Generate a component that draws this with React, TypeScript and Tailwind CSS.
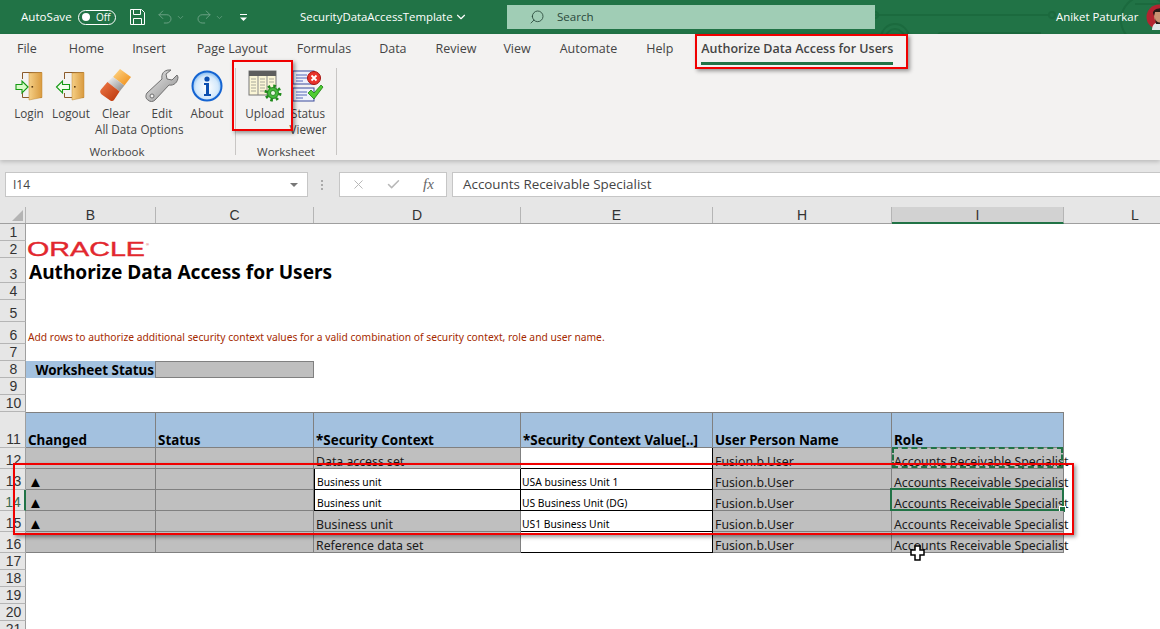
import { ChevronDown, Search, Undo2, Redo2, X, Check } from "lucide-react";

const ui = "font-['Open_Sans','Noto_Sans',sans-serif]";
const cell = "font-['Noto_Sans','Open_Sans',sans-serif] text-[12.3px] text-[#1a1a1a]";

const DoorIcon = ({ flip }: { flip?: boolean }) => (
  <svg width="32" height="32" viewBox="0 0 32 32">
    <defs>
      <linearGradient id={flip ? "doorB" : "doorA"} x1="0" x2="1" y1="0" y2="0">
        <stop offset="0" stopColor="#f5cf86" />
        <stop offset="1" stopColor="#d99a3e" />
      </linearGradient>
    </defs>
    <path d="M9.5 9V2.5h19v25h-19V23" fill="none" stroke="#8a5a2a" strokeWidth="1" />
    {flip ? (
      <>
        <path d="M17 3l12-.5v25l-12 2.5z" fill="url(#doorB)" stroke="#c08a36" strokeWidth=".5" />
        <rect x="19" y="16" width="1.6" height="1.6" fill="#5b3a12" />
        <path d="M1.5 17l6-6v3.5h7v5h-7V23z" fill="#f2fdec" stroke="#159a15" strokeWidth="1.1" />
      </>
    ) : (
      <>
        <path d="M16 3l13-.5v25l-13 2.5z" fill="url(#doorA)" stroke="#c08a36" strokeWidth=".5" />
        <rect x="18.5" y="16" width="1.6" height="1.6" fill="#5b3a12" />
        <path d="M15 17l-6-6v3.5H3v5h6V23z" fill="#d9fbc8" stroke="#159a15" strokeWidth="1.1" />
      </>
    )}
  </svg>
);

const EraserIcon = () => (
  <svg width="34" height="34" viewBox="0 0 34 34">
    <defs>
      <linearGradient id="er1" x1="0" x2="1" y1="0" y2="1">
        <stop offset="0" stopColor="#ffd98c" />
        <stop offset="1" stopColor="#ee8a12" />
      </linearGradient>
      <linearGradient id="er2" x1="0" x2="1" y1="0" y2="1">
        <stop offset="0" stopColor="#f8f8f8" />
        <stop offset="1" stopColor="#848484" />
      </linearGradient>
      <linearGradient id="er3" x1="0" x2="1" y1="0" y2="1">
        <stop offset="0" stopColor="#f07a48" />
        <stop offset="1" stopColor="#b8340a" />
      </linearGradient>
    </defs>
    <path d="M21 0l11 8-6.600 8.400L14 8z" fill="url(#er1)" />
    <path d="M14 8l11.400 8.400-4.800 6L8.400 13z" fill="url(#er2)" />
    <path d="M8.400 13l12.200 9.400L15 31c-1 1.300-2.500 1.200-3.800.4l-8.500-6C1 24 .6 22 2 20.500z" fill="url(#er3)" />
  </svg>
);

const WrenchIcon = () => (
  <svg width="34" height="34" viewBox="0 0 34 34">
    <defs>
      <linearGradient id="wr" x1="0" x2="1" y1="0" y2="1">
        <stop offset="0" stopColor="#ececec" />
        <stop offset="1" stopColor="#8c8c8c" />
      </linearGradient>
    </defs>
    <path
      d="M24 1c-5 0-8 4-7 9L2 24c-2 3-1 6 1 7 2 2 5 2 7 0l14-15c5 1 9-3 9-8l-1-2-5 5-5-1-1-5 5-4z"
      fill="url(#wr)"
      stroke="#6f6f6f"
      strokeWidth="1"
    />
    <circle cx="7" cy="27" r="2" fill="#f3f2f1" stroke="#6f6f6f" />
  </svg>
);

const InfoIcon = () => (
  <svg width="32" height="32" viewBox="0 0 32 32">
    <defs>
      <radialGradient id="inf" cx=".5" cy=".55" r=".55">
        <stop offset="0" stopColor="#ffffff" />
        <stop offset=".7" stopColor="#d3e8fb" />
        <stop offset="1" stopColor="#78b4ee" />
      </radialGradient>
    </defs>
    <circle cx="16" cy="16" r="14.5" fill="url(#inf)" stroke="#1464d2" strokeWidth="2" />
    <circle cx="16" cy="9" r="2.6" fill="#0c4fb0" />
    <path d="M13 13h5v11h2v2h-7v-2h2v-9h-2z" fill="#0c4fb0" />
  </svg>
);

const Gear = ({ x, y }: { x: number; y: number }) => (
  <g transform={`translate(${x} ${y})`}>
    <circle r="7" fill="none" stroke="#1e8a1a" strokeWidth="3" strokeDasharray="2.600 2.900" />
    <circle r="5.500" fill="#46bb3e" stroke="#12730f" strokeWidth=".8" />
    <circle r="2.500" fill="#e8f7e2" stroke="#12730f" strokeWidth=".8" />
  </g>
);

const UploadIcon = () => (
  <svg width="34" height="32" viewBox="0 0 34 32">
    <rect x="1" y="1" width="27" height="24" fill="#fbf6d6" stroke="#777" />
    <rect x="1" y="1" width="27" height="5" fill="#5e5e5e" />
    <path d="M10 6v19M19 6v19" stroke="#8b8b8b" />
    <path d="M3 9h5M3 12h5M3 15h5M3 18h5M3 21h5M12 9h5M12 12h5M12 15h5M12 18h5M12 21h5M21 9h5M21 12h5" stroke="#a8a89a" />
    <Gear x={25} y={23} />
  </svg>
);

const StatusIcon = () => (
  <svg width="32" height="34" viewBox="0 0 32 34">
    <rect x="1" y="2" width="21" height="13" fill="#eef1fb" stroke="#3b4a9c" />
    <rect x="1" y="19" width="21" height="13" fill="#eef1fb" stroke="#3b4a9c" />
    <path d="M4 6h11M4 9h11M4 12h7M4 23h11M4 26h11M4 29h7" stroke="#5566b8" />
    <circle cx="22" cy="9" r="6.500" fill="#e8322c" stroke="#a51410" />
    <path d="M19.500 6.500l5 5m0-5l-5 5" stroke="#fff" strokeWidth="1.800" />
    <path d="M16 24l3-3 3 3 7-8 2 2-9 12z" fill="#4fcc32" stroke="#1c7d12" strokeWidth=".8" />
  </svg>
);

const RibbonButton = ({ icon, lines, className }: { icon: React.ReactNode; lines: string[]; className: string }) => (
  <div className={`flex flex-col items-center shrink-0 ${className}`}>
    <div className="h-[35px] flex items-center justify-center">{icon}</div>
    <div className="mt-[2px] text-center text-[11.7px] leading-[16px] text-[#444] whitespace-nowrap">
      {lines.map((l) => (
        <div key={l}>{l}</div>
      ))}
    </div>
  </div>
);

const tabs = [
  { label: "File", cls: "ml-[17px]" },
  { label: "Home", cls: "ml-[32px]" },
  { label: "Insert", cls: "ml-[28px]" },
  { label: "Page Layout", cls: "ml-[31px]" },
  { label: "Formulas", cls: "ml-[29px]" },
  { label: "Data", cls: "ml-[28px]" },
  { label: "Review", cls: "ml-[29px]" },
  { label: "View", cls: "ml-[27px]" },
  { label: "Automate", cls: "ml-[29px]" },
  { label: "Help", cls: "ml-[29px]" },
];

const TitleBar = () => (
  <div className={`${ui} relative h-[34px] bg-[#217346] flex items-center text-[11.6px] text-white overflow-hidden`}>
    <svg className="absolute left-[800px] top-0" width="360" height="34" viewBox="0 0 360 34" fill="none" stroke="#1b6a3e" strokeWidth="2">
      <path d="M75 15h174" />
      <circle cx="252" cy="15" r="3" />
      <circle cx="75" cy="15" r="3" />
      <circle cx="95" cy="38" r="9" />
      <circle cx="95" cy="38" r="14" />
      <circle cx="141" cy="36" r="3" />
      <path d="M141 33h100" />
      <circle cx="345" cy="20" r="24" />
      <path d="M335 4h25" />
    </svg>
    <span className="ml-[21px] w-[50px] shrink-0 whitespace-nowrap">AutoSave</span>
    <div className="ml-[7px] w-[38px] h-[15px] shrink-0 rounded-full border border-white flex items-center">
      <span className="ml-[3px] w-[8px] h-[8px] rounded-full bg-white" />
      <span className="ml-[6px] text-[10px] leading-none">Off</span>
    </div>
    <svg className="ml-[13px] shrink-0" width="17" height="18" viewBox="0 0 17 18" fill="none" stroke="#fff" strokeWidth="1">
      <path d="M1.500 1.500h11l3 3v12h-14z" />
      <path d="M4.500 1.500v5h7v-5M4.500 16.500v-6h8v6" />
    </svg>
    <Undo2 className="ml-[10px] shrink-0 text-[#6aa184]" size={18} strokeWidth={1.3} />
    <ChevronDown className="ml-[2px] shrink-0 text-[#6aa184]" size={9} />
    <Redo2 className="ml-[10px] shrink-0 text-[#6aa184]" size={18} strokeWidth={1.3} />
    <ChevronDown className="ml-[2px] shrink-0 text-[#6aa184]" size={9} />
    <svg className="ml-[15px] shrink-0" width="9" height="9" viewBox="0 0 9 9" fill="none" stroke="#fff">
      <path d="M1 1.500h7" />
      <path d="M1 4.500l3.500 3.500 3.500-3.500z" fill="#fff" stroke="none" />
    </svg>
    <span className="ml-[52px] w-[153px] shrink-0 whitespace-nowrap text-[11.4px]">SecurityDataAccessTemplate</span>
    <ChevronDown className="ml-[1px] shrink-0" size={14} strokeWidth={2} />
    <div className="relative ml-[39px] w-[368px] h-[24px] shrink-0 bg-[#a0cdb5] flex items-center text-[#2b4a3c]">
      <Search className="ml-[22px] -scale-x-100" size={16} strokeWidth={1.3} />
      <span className="ml-[12px]">Search</span>
    </div>
    <span className="relative ml-[181px] w-[81px] shrink-0 whitespace-nowrap text-[11.4px]">Aniket Paturkar</span>
    <svg className="relative ml-[9px] shrink-0" width="26" height="26" viewBox="0 0 26 26">
      <circle cx="13" cy="13" r="12.5" fill="#b32430" />
      <path d="M6 26c0-6 4-8 8-8s8 2 8 8z" fill="#dfe6e8" />
      <ellipse cx="14" cy="12" rx="6" ry="7" fill="#c99272" />
      <path d="M7 9c0-6 14-7 15 0l-1 3-2-4H9l-1 4z" fill="#241a17" />
      <path d="M9 14c1 6 9 6 10 0l-1 6h-8z" fill="#241a17" />
    </svg>
  </div>
);

const Ribbon = () => (
  <div className={`${ui} h-[126px] bg-[#f3f2f1] shadow-[0_2px_4px_rgba(0,0,0,0.18)] relative`}>
    <div className="h-[31px] flex items-center text-[12.5px] text-[#444]">
      {tabs.map((t) => (
        <span key={t.label} className={`${t.cls} whitespace-nowrap`}>
          {t.label}
        </span>
      ))}
      <div className="ml-[28px] relative whitespace-nowrap font-semibold text-[12.5px]">
        Authorize Data Access for Users
        <div className="absolute left-0 right-0 top-[22px] h-[3px] bg-[#217346]" />
      </div>
    </div>
    <div className="flex h-[95px] pl-[9px] pt-[3px]">
      <div className="flex flex-col w-[226px]">
        <div className="flex h-[79px]">
          <RibbonButton className="w-[40px]" icon={<DoorIcon />} lines={["Login"]} />
          <RibbonButton className="ml-[2px] w-[40px]" icon={<DoorIcon flip />} lines={["Logout"]} />
          <RibbonButton className="ml-[2px] w-[46px]" icon={<EraserIcon />} lines={["Clear", "All Data"]} />
          <RibbonButton className="w-[46px]" icon={<WrenchIcon />} lines={["Edit", "Options"]} />
          <RibbonButton className="w-[44px]" icon={<InfoIcon />} lines={["About"]} />
        </div>
        <div className="text-center text-[11.5px] text-[#444] w-[216px]">Workbook</div>
      </div>
      <div className="w-px h-[87px] bg-[#c8c6c4]" />
      <div className="flex flex-col w-[100px]">
        <div className="flex h-[79px]">
          <RibbonButton className="ml-[7px] w-[44px]" icon={<UploadIcon />} lines={["Upload"]} />
          <RibbonButton className="w-[42px]" icon={<StatusIcon />} lines={["Status", "Viewer"]} />
        </div>
        <div className="text-center text-[11.5px] text-[#444]">Worksheet</div>
      </div>
      <div className="w-px h-[87px] bg-[#c8c6c4]" />
    </div>
  </div>
);

const FormulaBar = () => (
  <div className={`${ui} h-[47px] bg-[#e6e6e6] flex items-center pt-[2px] text-[12px] text-[#444]`}>
    <div className="ml-[5px] w-[303px] h-[25px] bg-white border border-[#c6c6c6] flex items-center justify-between pl-[7px] pr-[9px]">
      I14
      <span className="w-0 h-0 border-x-[4px] border-x-transparent border-t-[4px] border-t-[#777]" />
    </div>
    <div className="ml-[13px] w-[3px] flex flex-col gap-[2px]">
      <span className="w-[2px] h-[2px] bg-[#aaa]" />
      <span className="w-[2px] h-[2px] bg-[#aaa]" />
      <span className="w-[2px] h-[2px] bg-[#aaa]" />
    </div>
    <div className="ml-[15px] w-[108px] h-[25px] bg-white border border-[#c6c6c6] flex items-center">
      <X className="ml-[11px] text-[#b8b8b8]" size={15} strokeWidth={1.6} />
      <Check className="ml-[20px] text-[#b8b8b8]" size={15} strokeWidth={2.4} />
      <span className="ml-[22px] font-['Liberation_Serif',serif] italic text-[15px] text-[#666]">fx</span>
    </div>
    <div className="ml-[5px] flex-1 h-[25px] bg-white border border-[#c6c6c6] border-r-0 flex items-center pl-[10px] text-[13.4px]">
      Accounts Receivable Specialist
    </div>
  </div>
);

const columns = [
  { label: "B", w: "w-[130px]" },
  { label: "C", w: "w-[158px]" },
  { label: "D", w: "w-[207px]" },
  { label: "E", w: "w-[192px]" },
  { label: "H", w: "w-[179px]" },
  { label: "I", w: "w-[172px]", on: true },
  { label: "L", w: "w-[143px]" },
];

const ColumnHeaders = () => (
  <div className="h-[17px] flex bg-[#e6e6e6] border-b border-[#9f9f9f] font-['Liberation_Sans',sans-serif] text-[14px] text-[#333]">
    <div className="w-[26px] shrink-0 relative border-r border-[#b5b5b5]">
      <span className="absolute right-[2px] bottom-[2px] w-0 h-0 border-l-[11px] border-l-transparent border-b-[11px] border-b-[#b4b4b4]" />
    </div>
    {columns.map((c) => (
      <div
        key={c.label}
        className={`${c.w} shrink-0 text-center leading-[16px] border-r border-[#b5b5b5] ${c.on ? "bg-[#d2d2d2] border-b-2 border-b-[#217346] h-[17px]" : ""}`}
      >
        {c.label}
      </div>
    ))}
  </div>
);

const RowNum = ({ n, h, on }: { n: number; h: string; on?: boolean }) => (
  <div
    className={`${h} w-[26px] shrink-0 flex items-end justify-center pl-[2px] leading-[15px] bg-[#e6e6e6] border-b border-[#b5b5b5] border-r font-['Liberation_Sans',sans-serif] text-[14px] ${on ? "bg-[#d2d2d2] border-r-2 border-r-[#217346] text-[#3a6b50]" : "border-r-[#9f9f9f] text-[#333]"}`}
  >
    {n}
  </div>
);

const Bar = ({ n, h, children }: { n: number; h: string; children?: React.ReactNode }) => (
  <div className="flex">
    <RowNum n={n} h={h} />
    <div className="flex-1 min-w-0 flex items-end">{children}</div>
  </div>
);

const base = "h-full shrink-0 box-border flex items-end leading-[13px] whitespace-nowrap";
const gray = "bg-[#bfbfbf] border-r border-b border-[#808080]";
const white = "bg-white border-r border-b border-black";
const small = "font-['Noto_Sans',sans-serif] text-[10.3px] text-black";

const headers = [
  { t: "Changed", w: "w-[130px]" },
  { t: "Status", w: "w-[158px]" },
  { t: "*Security Context", w: "w-[207px]" },
  { t: "*Security Context Value[..]", w: "w-[192px]" },
  { t: "User Person Name", w: "w-[179px]" },
  { t: "Role", w: "w-[172px]" },
];

const rows = [
  { n: 12, mark: false, ctx: "Data access set", ctxWhite: false, val: "" },
  { n: 13, mark: true, ctx: "Business unit", ctxWhite: true, val: "USA business Unit 1" },
  { n: 14, mark: true, ctx: "Business unit", ctxWhite: true, val: "US Business Unit (DG)" },
  { n: 15, mark: true, ctx: "Business unit", ctxWhite: false, val: "US1 Business Unit" },
  { n: 16, mark: false, ctx: "Reference data set", ctxWhite: false, val: "" },
];

const DataRow = ({ r }: { r: (typeof rows)[number] }) => (
  <div className="flex">
    <RowNum n={r.n} h="h-[21px]" on={r.n === 14} />
    <div className={`${cell} flex h-[21px]`}>
      <div className={`${base} ${gray} w-[130px] pl-[2px]`}>
        {r.mark && <span className="text-[15px] leading-[15px] text-black">▲</span>}
      </div>
      <div className={`${base} ${gray} w-[158px]`} />
      <div className={`${base} w-[207px] pl-[2px] ${r.ctxWhite ? `${white} ${small} border-l` : gray}`}>{r.ctx}</div>
      <div className={`${base} ${white} ${small} w-[192px] pl-[1px]`}>{r.val}</div>
      <div className={`${base} ${gray} w-[179px] pl-[2px]`}>Fusion.b.User</div>
      <div className={`${base} ${gray} w-[172px] pl-[2px] relative z-10`}>
        Accounts Receivable Specialist
        {r.n === 12 && <div className="absolute inset-0 -top-px border-2 border-dashed border-[#217346]" />}
        {r.n === 14 && (
          <>
            <div className="absolute -left-[2px] -top-[2px] -right-[1px] -bottom-[1px] border-2 border-[#217346]" />
            <div className="absolute -right-[3px] -bottom-[3px] w-[5px] h-[5px] bg-[#217346] border border-white box-content" />
          </>
        )}
      </div>
    </div>
  </div>
);

const Sheet = () => (
  <div className="relative bg-white">
    <Bar n={1} h="h-[17px]" />
    <Bar n={2} h="h-[17px]">
      <svg className="ml-[1px] overflow-visible" width="124" height="17" viewBox="0 0 124 17">
        <text x="0" y="15" fontFamily="Liberation Sans, sans-serif" fontSize="21" fill="#e2272e" stroke="#e2272e" strokeWidth=".4" textLength="118" lengthAdjust="spacingAndGlyphs">
          ORACLE
        </text>
        <text x="119" y="5" fontFamily="Liberation Sans, sans-serif" fontSize="4" fill="#e2272e">
          ®
        </text>
      </svg>
    </Bar>
    <Bar n={3} h="h-[25px]">
      <div className="ml-[3px] font-['Noto_Sans',sans-serif] font-bold text-[19.100px] leading-[21px] text-black whitespace-nowrap">
        Authorize Data Access for Users
      </div>
    </Bar>
    <Bar n={4} h="h-[17px]" />
    <Bar n={5} h="h-[22px]" />
    <Bar n={6} h="h-[22px]">
      <div className="ml-[2px] font-['Noto_Sans',sans-serif] text-[10.270px] leading-[14px] text-[#a52a00] whitespace-nowrap">
        Add rows to authorize additional security context values for a valid combination of security context, role and user name.
      </div>
    </Bar>
    <Bar n={7} h="h-[17px]" />
    <Bar n={8} h="h-[17px]">
      <div className="w-[130px] h-[17px] bg-[#a3c1df] flex items-end justify-end pr-[1px] font-['Noto_Sans',sans-serif] font-bold text-[13.400px] leading-[16px] text-black border-r border-[#808080]">
        Worksheet Status
      </div>
      <div className="w-[158px] h-[17px] bg-[#bfbfbf] border border-l-0 border-[#808080]" />
    </Bar>
    <Bar n={9} h="h-[17px]" />
    <Bar n={10} h="h-[17px]" />
    <div className="flex">
      <RowNum n={11} h="h-[36px]" />
      <div className="flex h-[36px] font-['Noto_Sans',sans-serif] font-bold text-[13.400px] text-black">
        {headers.map((c) => (
          <div key={c.t} className={`${base} ${c.w} bg-[#a3c1df] border-t border-r border-b border-[#808080] pl-[2px]`}>
            {c.t}
          </div>
        ))}
      </div>
    </div>
    {rows.map((r) => (
      <DataRow key={r.n} r={r} />
    ))}
    <Bar n={17} h="h-[17px]" />
    <Bar n={18} h="h-[17px]" />
    <Bar n={19} h="h-[17px]" />
    <Bar n={20} h="h-[17px]" />
    <Bar n={21} h="h-[17px]" />
  </div>
);

const RedBox = ({ className }: { className: string }) => (
  <div className={`absolute border-[2px] border-[#f00000] shadow-[2px_2px_4px_rgba(0,0,0,0.4)] pointer-events-none z-20 ${className}`} />
);

export default function App() {
  return (
    <div className="relative w-[1160px] h-[629px] overflow-hidden bg-white">
      <TitleBar />
      <Ribbon />
      <FormulaBar />
      <ColumnHeaders />
      <Sheet />
      <RedBox className="left-[695px] top-[34px] w-[213px] h-[35px]" />
      <RedBox className="left-[232px] top-[60px] w-[61px] h-[71px]" />
      <RedBox className="left-[13px] top-[463px] w-[1061px] h-[72px]" />
      <svg className="absolute left-[910px] top-[545px] z-30" width="15" height="16" viewBox="0 0 15 16">
        <path d="M5 1h5v4h4v5h-4v5H5v-5H1V5h4z" fill="#fff" stroke="#000" strokeWidth="1.500" />
      </svg>
    </div>
  );
}
